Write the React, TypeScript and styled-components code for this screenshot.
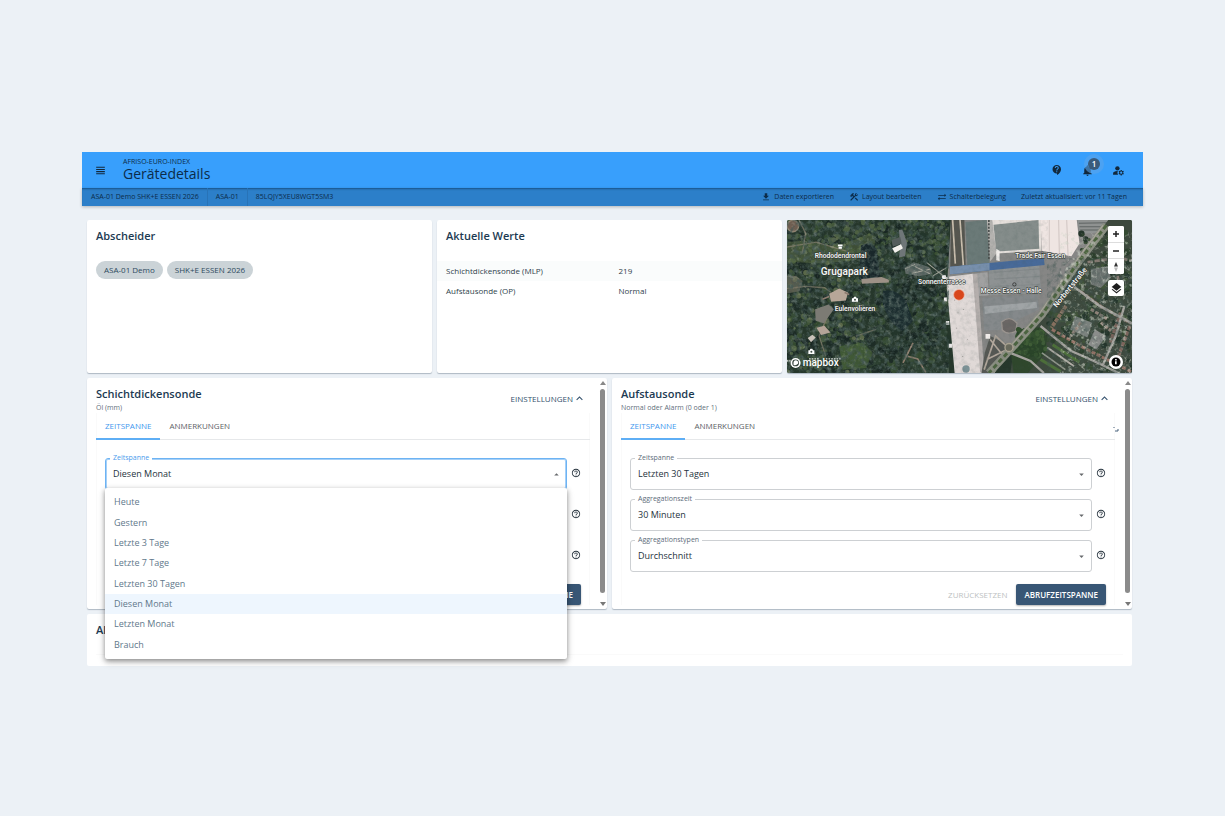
import React, { useId } from "react";
import styled, { createGlobalStyle, css } from "styled-components";
import {
  MdViewHeadline,
  MdContactSupport,
  MdNotifications,
  MdManageAccounts,
  MdDownload,
  MdConstruction,
  MdSyncAlt,
  MdExpandLess,
  MdArrowDropDown,
  MdArrowDropUp,
  MdHelpOutline,
  MdLayers,
} from "react-icons/md";

const navy = "#17364f";
const blue = "#389ffc";

const GlobalStyle = createGlobalStyle`
  *, *::before, *::after { box-sizing: border-box; }
  body {
    margin: 0;
    background: #ecf1f6;
    font-family: "Open Sans", "Noto Sans", sans-serif;
    font-size: 8px;
    line-height: 12px;
    color: ${navy};
  }
  button, select { font: inherit; color: inherit; margin: 0; }
  h1, h2, p, ul { margin: 0; padding: 0; }
`;

const Page = styled.div`
  padding: 152px 82px 150px;
`;

const TopBar = styled.header`
  display: flex;
  align-items: center;
  height: 36px;
  padding: 0 18px 0 12px;
  background: ${blue};
  color: #0c2c49;
`;

const IconButton = styled.button`
  position: relative;
  display: flex;
  align-items: center;
  justify-content: center;
  width: 13px;
  height: 13px;
  padding: 0;
  border: 0;
  background: none;
  color: #12283c;
`;

const Heading = styled.div`
  flex: 1;
  margin-left: 16px;
`;

const Brand = styled.p`
  font-size: 7px;
  line-height: 8px;
`;

const PageTitle = styled.h1`
  font-size: 14px;
  line-height: 16px;
  font-weight: 400;
`;

const Actions = styled.div`
  display: flex;
  gap: 18px;
`;

const Badge = styled.span`
  position: absolute;
  top: -6px;
  left: 7px;
  width: 12px;
  height: 12px;
  border-radius: 50%;
  background: #3a5b7b;
  box-shadow: 0 0 0 4px rgba(90, 165, 235, 0.6);
  color: #fff;
  font-size: 8px;
  font-weight: 600;
  line-height: 12px;
  text-align: center;
`;

const SubBar = styled.nav`
  display: flex;
  align-items: center;
  justify-content: space-between;
  height: 18px;
  padding: 0 16px 0 1px;
  background: #2c7fc9;
  box-shadow: inset 0 2px 2px -1px rgba(10, 50, 90, 0.6), 0 1px 3px rgba(0, 0, 0, 0.25);
  color: #0c2c49;
  font-size: 7px;
`;

const Crumbs = styled.ul`
  display: flex;
  list-style: none;
`;

const Crumb = styled.li`
  padding: 0 8px;
  line-height: 18px;
  & + & { border-left: 1px solid #2873b7; }
`;

const Tools = styled.div`
  display: flex;
  align-items: center;
  gap: 15px;
`;

const Tool = styled.button`
  display: flex;
  align-items: center;
  gap: 3px;
  padding: 0;
  border: 0;
  background: none;
`;

const Main = styled.main`
  display: grid;
  grid-template-columns: repeat(6, 1fr);
  gap: 5px;
  padding: 14px 11px 0 5px;
`;

const Card = styled.section<{ $span: number; $min: number }>`
  grid-column: span ${(p) => p.$span};
  min-width: 0;
  min-height: ${(p) => p.$min}px;
  border-radius: 2px;
  background: #fff;
  box-shadow: 0 1px 1px rgba(60, 80, 100, 0.35);
`;

const InfoCard = styled(Card)`
  padding-top: 8px;
`;

const CardTitle = styled.h2`
  font-size: 11px;
  line-height: 16px;
  font-weight: 600;
  color: #1c3a52;
`;

const InsetTitle = styled(CardTitle)`
  padding: 0 9px;
`;

const Chips = styled.ul`
  display: flex;
  gap: 4px;
  margin: 17px 9px 0;
  list-style: none;
`;

const Chip = styled.li`
  padding: 0 8px;
  border-radius: 9px;
  background: #cbd3d7;
  color: #2d4a5e;
  line-height: 18px;
`;

const Values = styled.table`
  width: 100%;
  margin-top: 17px;
  border-collapse: collapse;
  table-layout: fixed;
  color: #2f3f4b;
  th, td {
    height: 20px;
    padding: 0 9px;
    font-weight: 400;
    text-align: left;
  }
  tr:nth-child(odd) { background: #fafcfc; }
`;

const SensorCard = styled(Card)`
  display: flex;
`;

const SensorBody = styled.div`
  flex: 1;
  min-width: 0;
  padding: 8px 8px 3px 9px;
`;

const SensorHead = styled.div`
  display: flex;
  justify-content: space-between;
  align-items: flex-start;
  height: 27px;
  padding-right: 4px;
`;

const Unit = styled.p`
  font-size: 7px;
  color: #5f6f7d;
`;

const Toggle = styled.button`
  display: flex;
  align-items: center;
  margin-top: 6px;
  padding: 0;
  border: 0;
  background: none;
  color: #34516d;
`;

const Panel = styled.div`
  position: relative;
  box-shadow: inset 1px 0 #fafafa, inset -1px 0 #fafafa;
`;

const TabRow = styled.div`
  display: flex;
  height: 27px;
  border-bottom: 1px solid #e6e8ea;
`;

const Tab = styled.button<{ $active?: boolean }>`
  height: 27px;
  padding: 0 9px 2px;
  border: 0;
  background: none;
  color: #5d6267;
  ${(p) =>
    p.$active &&
    css`
      color: #3f97ee;
      box-shadow: inset 0 -2px 0 #5eaef5;
    `}
`;

const Refresh = styled.svg`
  position: absolute;
  top: 13px;
  right: -4px;
`;

const Form = styled.form`
  display: grid;
  gap: 9px;
  padding: 18px 9px 0;
`;

const FieldRow = styled.div`
  display: flex;
  align-items: flex-start;
  gap: 4px;
`;

const FieldBox = styled.div<{ $covered?: boolean }>`
  position: relative;
  flex: 1;
  min-width: 0;
  visibility: ${(p) => (p.$covered ? "hidden" : "visible")};
`;

const FieldLabel = styled.label<{ $open?: boolean }>`
  position: absolute;
  top: -6px;
  left: 5px;
  padding: 0 3px;
  background: #fff;
  color: ${(p) => (p.$open ? "#4a9bec" : "#5c6c7a")};
  font-size: 7px;
`;

const Select = styled.select<{ $open?: boolean }>`
  display: block;
  appearance: none;
  width: 100%;
  height: 32px;
  padding: 0 7px;
  border: 1px solid #cdd0d3;
  border-radius: 3px;
  background: #fff;
  color: #26333d;
  font-size: 9px;
  ${(p) =>
    p.$open &&
    css`
      border-color: #6db3f3;
      box-shadow: inset 0 0 0 1px #a5d0f8;
    `}
`;

const Arrow = styled.span`
  position: absolute;
  top: 11px;
  right: 5px;
  display: flex;
  color: #66696c;
  pointer-events: none;
`;

const Help = styled.button`
  display: flex;
  width: 10px;
  height: 30px;
  padding: 0;
  border: 0;
  align-items: center;
  background: none;
  color: #25323d;
`;

const Menu = styled.ul`
  position: absolute;
  z-index: 5;
  top: 30px;
  left: 0;
  right: 0;
  display: grid;
  grid-auto-rows: 1fr;
  height: 171px;
  padding: 4px 0;
  border-radius: 2px;
  background: #fff;
  box-shadow: 0 2px 5px rgba(0, 0, 0, 0.38), 0 3px 9px rgba(0, 0, 0, 0.14);
  list-style: none;
`;

const Option = styled.li`
  display: flex;
  align-items: center;
  padding: 0 9px;
  color: #61788b;
  font-size: 9px;
  &[aria-selected="true"] { background: #eef6fe; }
`;

const Buttons = styled.div`
  display: flex;
  justify-content: flex-end;
  gap: 9px;
  padding-top: 3px;
`;

const ResetButton = styled.button<{ $covered?: boolean }>`
  height: 21px;
  padding: 0;
  border: 0;
  background: none;
  color: #bcbfc2;
  visibility: ${(p) => (p.$covered ? "hidden" : "visible")};
`;

const SubmitButton = styled.button`
  height: 21px;
  padding: 0 8px;
  border: 0;
  border-radius: 2px;
  background: #385675;
  box-shadow: 0 1px 2px rgba(0, 0, 0, 0.3);
  color: #fff;
  font-weight: 600;
`;

const Rail = styled.div`
  display: flex;
  flex-direction: column;
  align-items: center;
  gap: 4px;
  width: 9px;
  padding: 3px 0;
`;

const Thumb = styled.div`
  flex: 1;
  width: 5px;
  margin-bottom: 5px;
  border-radius: 3px;
  background: #8b8b8b;
`;

const RailArrow = styled.span<{ $down?: boolean }>`
  width: 0;
  height: 0;
  border: solid transparent;
  border-width: 0 3px;
  ${(p) => (p.$down ? "border-top: 4px solid #777;" : "border-bottom: 4px solid #888;")}
`;

const AlarmCard = styled(Card)`
  padding: 8px 9px 0;
  box-shadow: none;
`;

const AlarmLine = styled.div`
  height: 17px;
  border-bottom: 1px solid #fafafa;
`;

const MapCard = styled(Card)`
  position: relative;
  overflow: hidden;
`;

const MapDrawing = styled.svg`
  display: block;
  width: 100%;
  height: 153px;
`;

const MapControls = styled.div`
  position: absolute;
  top: 6px;
  right: 8px;
  display: grid;
  gap: 6px;
`;

const ControlGroup = styled.div`
  overflow: hidden;
  border-radius: 2px;
  background: #fff;
`;

const ControlButton = styled.button`
  display: flex;
  align-items: center;
  justify-content: center;
  width: 16px;
  height: 16px;
  padding: 0;
  border: 0;
  background: #fff;
  color: #1d1d1d;
  & + & { border-top: 1px solid #ddd; }
`;

const InfoButton = styled.button`
  position: absolute;
  right: 9px;
  bottom: 4px;
  width: 14px;
  height: 14px;
  padding: 0;
  border: 0;
  background: none;
`;

/* Small seeded generator so the foliage looks the same on each render. */
function seeded(seed: number) {
  let s = seed;
  return () => {
    s = (s * 16807) % 2147483647;
    return s / 2147483647;
  };
}

type Blob = { x: number; y: number; r: number; c: string };

function foliage(seed: number, n: number, box: number[], colors: string[], min: number, max: number): Blob[] {
  const rnd = seeded(seed);
  return Array.from({ length: n }, () => ({
    x: box[0] + rnd() * box[2],
    y: box[1] + rnd() * box[3],
    r: min + rnd() * (max - min),
    c: colors[Math.floor(rnd() * colors.length)],
  }));
}

const forestBase = foliage(11, 750, [21, 24, 485, 456], ["#1d2c26", "#23352b", "#2b3f2f", "#182622", "#33492f"], 5, 13);
const forestLight = foliage(29, 200, [21, 24, 230, 456], ["#43573a", "#4d6040", "#3a5033", "#5a6849"], 3, 9);
const forestTop = foliage(71, 90, [200, 24, 300, 120], ["#43573a", "#3a5033", "#4d6040"], 3, 8);
const townTrees = foliage(43, 150, [900, 60, 156, 420], ["#2c3f2c", "#354a32", "#24352a", "#41543a"], 4, 10);
const townTreesLow = foliage(44, 60, [800, 300, 120, 90], ["#2c3f2c", "#354a32", "#24352a", "#41543a"], 4, 10);
const parkTrees = foliage(57, 130, [712, 350, 84, 80], ["#34502f", "#3f5d36", "#2a4429"], 4, 10);

const Blobs = ({ items }: { items: Blob[] }) => (
  <>
    {items.map((b, i) => (
      <circle key={i} cx={b.x} cy={b.y} r={b.r} fill={b.c} />
    ))}
  </>
);

const Camera = ({ x, y }: { x: number; y: number }) => (
  <g transform={`translate(${x} ${y})`}>
    <path d="M-9-4h4l2-4h6l2 4h4v11h-18z" fill="#fff" />
    <circle cy="1" r="3" fill="#46544a" />
  </g>
);

function SatelliteMap() {
  return (
    <MapDrawing viewBox="21 24 1035 456" preserveAspectRatio="xMidYMid slice" role="img" aria-label="Satellitenkarte">
      <defs>
        <filter id="grain" x="0" y="0" width="100%" height="100%">
          <feTurbulence type="fractalNoise" baseFrequency="0.07" numOctaves="4" seed="8" />
          <feColorMatrix values="0 0 0 0 0.06  0 0 0 0 0.1  0 0 0 0 0.09  1.8 1.4 0 0 -1.4" />
        </filter>
        <filter id="glint" x="0" y="0" width="100%" height="100%">
          <feTurbulence type="fractalNoise" baseFrequency="0.08" numOctaves="4" seed="21" />
          <feColorMatrix values="0 0 0 0 0.62  0 0 0 0 0.66  0 0 0 0 0.58  0 3 2 0 -2.6" />
        </filter>
      </defs>

      <rect x="21" y="24" width="1035" height="456" fill="#26372b" />
      <Blobs items={forestBase} />
      <Blobs items={forestLight} />
      <Blobs items={forestTop} />

      {/* clearings, ponds and paths of the park */}
      <path d="M21 90L90 84l60 20 50-10 70-30 20 10-10 50-60 20-90 10-110-6z" fill="#5a6b44" opacity=".55" />
      <path d="M180 400l70-10 30 30-20 45-70 5z" fill="#4e6a3a" opacity=".6" />
      <path d="M245 100q30-15 45 10l12 80-30 25-34-15z" fill="#19272a" />
      <path d="M310 235q40-10 70 30l20 60-30 30q-40-20-60-80z" fill="#1c2d2f" />
      <path d="M21 228l60-6 55 4 20 14M60 24l20 40-10 60M150 300l-30 70 20 60M21 105l90-15 100 30M230 370l60-20" fill="none" stroke="#8d8572" strokeWidth="4" opacity=".7" />
      <circle cx="42" cy="42" r="17" fill="#6f5e51" stroke="#8f8270" strokeWidth="4" />
      <path d="M21 190h30l20 16-10 30-40 8z" fill="#7b7765" opacity=".6" />
      <path d="M374 166l28-16 46 14 10 20-40 8-40-8z" fill="#5f6965" />
      <path d="M400 160l50 24M392 184l60-14M460 190l40-24M440 150l50 40M376 170l30-14" fill="none" stroke="#aaa99e" strokeWidth="3" />
      <path d="M384 430l30 8 24 40M400 390l-30 60" fill="none" stroke="#8d7c6c" strokeWidth="5" />

      {/* exhibition halls */}
      <path d="M513 24h460l-60 130-120 160-180 166h-88l-22-290z" fill="#868685" />
      <path d="M513 24h40l4 140-46 2z" fill="#56564f" />
      <path d="M518 24l8 130M540 24l10 136" stroke="#cabfae" strokeWidth="5" />
      <path d="M556 30l64-6 8 128-66 10z" fill="#6b7a78" />
      <path d="M620 24h20l8 100-18 24z" fill="#b5b3b0" />
      <path d="M626 24v120" stroke="#4c504f" strokeWidth="5" strokeDasharray="6 4" />
      <path d="M636 24h145l2 92-134 8z" fill="#e6e0dc" />
      <path d="M640 38l134-14 2 86-128 8z" fill="#858d8b" />
      <path d="M648 110v34l10 2v-30z" fill="#f2efec" />
      <path d="M780 24h108l8 70-24 38-88-16z" fill="#efe5e2" />
      <path d="M806 24v94M834 24l2 98M858 24l4 104" stroke="#d0c5c2" strokeWidth="3" />
      <path d="M890 24h92l-8 36-76 6z" fill="#8f9291" />
      <path d="M894 34l84-2M896 44h80M898 54h76" stroke="#5f6463" strokeWidth="3" />
      <path d="M626 170l150-12 6 84-154 6z" fill="#8e9293" />
      <path d="M576 184l46-4 4 68-44 4z" fill="#a1a1a1" />
      <path d="M640 180l136-10M642 200l136-8M644 222l134-6" stroke="#7e8485" strokeWidth="2" />
      <path d="M606 256l164-10 6 44-60 30-40 30-64 4z" fill="#85898b" />
      <path d="M612 282l156-14 2 18-156 18z" fill="#a0a4a6" />
      <path d="M510 163l280-26 2 21-282 28z" fill="#486a99" />
      <path d="M510 163l118-11v22l-118 12z" fill="#7890ad" />
      <path d="M498 194l80-10 32 296h-86z" fill="#e0d9d7" />
      <path d="M578 186l14-2 20 294h-12z" fill="#b4aeac" />
      <path d="M524 262v2M534 300v2M550 290v2M530 345v2M562 380v2M548 430v2M570 330v2" stroke="#8f8a88" strokeWidth="3" />
      <path d="M492 255h10v12h-10zM498 325h10v12h-10zM506 393h10v12h-10zM486 188h12v12h-12z" fill="#f1eeee" />
      <circle cx="558" cy="468" r="11" fill="#7c9296" />
      <path d="M664 328q24-22 46 4l-4 24q-26 12-40-4z" fill="#6b6765" stroke="#9a948f" strokeWidth="4" />
      <path d="M604 480l10-60 16-50 50 24 10 30-50 56z" fill="#565854" />
      <path d="M612 470l34-100 40 36-46 74M630 380l40 50M620 440l60-30" fill="none" stroke="#b2a79c" strokeWidth="5" />
      <path d="M616 364h14v14h-14z" fill="#f0ecea" />

      {/* residential area with its streets */}
      <path d="M982 24h74v456H690l10-70 80-90 90-130 60-100z" fill="#3d493d" />
      <Blobs items={townTrees} />
      <Blobs items={townTreesLow} />
      <path d="M930 170l50-8 10 34-30 30-30-10z" fill="#6f7572" />
      <path d="M884 310l50 20-14 44-52-24z" fill="#7a817d" />
      <path d="M942 350l34 20-30 40-24-14z" fill="#8b8d8b" />
      <path d="M920 150l90-14 46 10M1000 150l14 60" fill="none" stroke="#857a72" strokeWidth="8" strokeDasharray="16 5" />
      <path d="M900 238l60 44 90 50" fill="none" stroke="#8d7468" strokeWidth="9" strokeDasharray="13 4" />
      <path d="M900 330l-30 40M960 330l30 24M930 290l50 30" fill="none" stroke="#94857b" strokeWidth="9" strokeDasharray="11 4" />
      <path d="M1018 300l-30 90M1046 340l-34 90" fill="none" stroke="#7d655c" strokeWidth="10" strokeDasharray="13 4" />
      <path d="M856 280l-44 66" fill="none" stroke="#87705f" strokeWidth="11" strokeDasharray="12 3" />
      <path d="M814 350l86 50 90 46 60 30" fill="none" stroke="#947265" strokeWidth="9" strokeDasharray="12 5" />
      <path d="M700 480l-10-70 30-60 56-6 24 30-8 50-50 56z" fill="#2f472c" />
      <Blobs items={parkTrees} />
      <path d="M800 404l80 56" stroke="#b4b0a8" strokeWidth="6" />
      <path d="M784 420l70 50" stroke="#8f958a" strokeWidth="5" />
      <path d="M780 440l60 36M816 396l80 52" stroke="#4d7039" strokeWidth="9" />
      <path d="M780 340l90 74 90 40 60 30M876 220l80 60 100 54M690 420l60 24 40 36M1030 280l-26 90-40 90" fill="none" stroke="#a5a39e" strokeWidth="7" />
      <path d="M976 40l-94 124-96 140-90 100-70 76" fill="none" stroke="#8b8f82" strokeWidth="23" />
      <path d="M976 40l-94 124-96 140-90 100-70 76" fill="none" stroke="#4d6540" strokeWidth="9" strokeDasharray="14 9" />
      <path d="M966 40l-94 124-96 140-86 96" fill="none" stroke="#aaa69c" strokeWidth="3" />
      <circle cx="686" cy="404" r="12" fill="#6a6b5d" stroke="#b0a795" strokeWidth="4" />

      <rect x="21" y="24" width="484" height="456" filter="url(#grain)" />
      <rect x="21" y="24" width="484" height="456" filter="url(#glint)" opacity=".22" />
      <rect x="800" y="140" width="256" height="340" filter="url(#grain)" opacity=".6" />
      <rect x="840" y="60" width="216" height="420" filter="url(#glint)" opacity=".6" />
      <rect x="505" y="24" width="295" height="456" filter="url(#grain)" opacity=".14" />

      {/* pale ground and roofs that stand out from the trees */}
      <path d="M150 244l30-16 26 12-6 24-44 4z" fill="#b7a698" />
      <path d="M150 252l-20 8M196 240l14 6" stroke="#8d7c70" strokeWidth="5" />
      <path d="M108 290l40-14 16 14-30 42-24-8z" fill="#7c7b74" />
      <path d="M112 345l24-6 18 20-28 8z" fill="#b5a498" />
      <path d="M246 200l60-6 22 8v8l-80 4z" fill="#9d9186" />
      <path d="M358 54l10-2 14 40-6 40-18 4 4-30z" fill="#6f7678" />
      <path d="M336 84l26-10 4 20-26 10z" fill="#555d5c" />
      <path d="M338 108l26-12 6 12-24 14z" fill="#f3f0ec" />
      <path d="M86 376l14-10 10 8-14 14z" fill="#c9c2ba" />

      {/* place names */}
      <g fill="#f4f5f3" stroke="#2c3430" strokeWidth="3" paintOrder="stroke" fontFamily="Roboto, sans-serif" fontWeight="600" fontSize="20">
        <text x="107" y="136">Rhododendrontal</text>
        <text x="125" y="188" fontSize="30">Grugapark</text>
        <text x="167" y="294">Eulenvolieren</text>
        <text x="415" y="215">Sonnenterrasse</text>
        <text x="705" y="137">Trade Fair Essen</text>
        <text x="602" y="242">Messe Essen - Halle</text>
        <text transform="translate(828 286) rotate(-51)" fontSize="23">Norbertstraße</text>
      </g>
      <path d="M176 97h14v5h-14zM178 104h10v6h-10z" fill="#fff" />
      <Camera x={227} y={261} />
      <Camera x={97} y={416} />
      <circle cx="702" cy="216" r="5" fill="none" stroke="#222" strokeWidth="2" />
      <circle cx="537" cy="247" r="16" fill="#d8471c" stroke="#f0b9a8" strokeWidth="2" />

      {/* provider mark, over a caption that it hides for the most part */}
      <path d="M23 444h12M90 438h30M140 438h44" stroke="#dfe2df" strokeWidth="4" strokeDasharray="5 3" />
      <circle cx="50" cy="450" r="15" fill="#fff" />
      <circle cx="50" cy="450" r="10" fill="#34423a" />
      <path d="M44 456q-2-14 7-14 9 2 6 10-5 7-13 4z" fill="#fff" />
      <text x="71" y="458" fill="#fff" fontFamily="Roboto, sans-serif" fontWeight="500" fontSize="30">mapbox</text>
    </MapDrawing>
  );
}

const ranges = [
  "Heute",
  "Gestern",
  "Letzte 3 Tage",
  "Letzte 7 Tage",
  "Letzten 30 Tagen",
  "Diesen Monat",
  "Letzten Monat",
  "Brauch",
];

type FieldProps = { label: string; value: string; open?: boolean; covered?: boolean; options?: string[] };

function Field({ label, value, open, covered, options = [value] }: FieldProps) {
  const id = useId();
  return (
    <FieldRow>
      <FieldBox $covered={covered}>
        <Select id={id} defaultValue={value} $open={open}>
          {options.map((o) => (
            <option key={o}>{o}</option>
          ))}
        </Select>
        <FieldLabel htmlFor={id} $open={open}>{label}</FieldLabel>
        <Arrow>{open ? <MdArrowDropUp size={11} /> : <MdArrowDropDown size={11} />}</Arrow>
        {open && (
          <Menu role="listbox" aria-label={label}>
            {options.map((o) => (
              <Option key={o} role="option" aria-selected={o === value}>{o}</Option>
            ))}
          </Menu>
        )}
      </FieldBox>
      <Help type="button" aria-label={`Hilfe zu ${label}`}>
        <MdHelpOutline size={10} />
      </Help>
    </FieldRow>
  );
}

type SensorProps = { title: string; unit: string; range: string; open?: boolean; loading?: boolean };

function Sensor({ title, unit, range, open, loading }: SensorProps) {
  return (
    <SensorCard $span={3} $min={231}>
      <SensorBody>
        <SensorHead>
          <div>
            <CardTitle>{title}</CardTitle>
            <Unit>{unit}</Unit>
          </div>
          <Toggle type="button" aria-expanded="true">
            EINSTELLUNGEN <MdExpandLess size={13} />
          </Toggle>
        </SensorHead>
        <Panel>
          <TabRow role="tablist">
            <Tab role="tab" aria-selected="true" $active>ZEITSPANNE</Tab>
            <Tab role="tab" aria-selected="false">ANMERKUNGEN</Tab>
          </TabRow>
          {loading && (
            <Refresh width="6" height="7" viewBox="0 0 6 7" aria-hidden="true">
              <path d="M1 1v1M2 5h3V3" fill="none" stroke="#47607a" />
            </Refresh>
          )}
          <Form onSubmit={(e: React.FormEvent) => e.preventDefault()}>
            <Field label="Zeitspanne" value={range} open={open} options={ranges} />
            <Field label="Aggregationszeit" value="30 Minuten" covered={open} />
            <Field label="Aggregationstypen" value="Durchschnitt" covered={open} />
            <Buttons>
              <ResetButton type="reset" disabled $covered={open}>ZURÜCKSETZEN</ResetButton>
              <SubmitButton type="submit">ABRUFZEITSPANNE</SubmitButton>
            </Buttons>
          </Form>
        </Panel>
      </SensorBody>
      <Rail aria-hidden="true">
        <RailArrow />
        <Thumb />
        <RailArrow $down />
      </Rail>
    </SensorCard>
  );
}

export default function App() {
  return (
    <Page>
      <GlobalStyle />
      <TopBar>
        <IconButton aria-label="Menü"><MdViewHeadline size={15} /></IconButton>
        <Heading>
          <Brand>AFRISO-EURO-INDEX</Brand>
          <PageTitle>Gerätedetails</PageTitle>
        </Heading>
        <Actions>
          <IconButton aria-label="Hilfe"><MdContactSupport size={12} /></IconButton>
          <IconButton aria-label="Benachrichtigungen">
            <MdNotifications size={13} />
            <Badge>1</Badge>
          </IconButton>
          <IconButton aria-label="Konto"><MdManageAccounts size={13} /></IconButton>
        </Actions>
      </TopBar>
      <SubBar>
        <Crumbs>
          <Crumb>ASA-01 Demo SHK+E ESSEN 2026</Crumb>
          <Crumb>ASA-01</Crumb>
          <Crumb>85LQJY5XEU8WGT5SM3</Crumb>
        </Crumbs>
        <Tools>
          <Tool><MdDownload size={10} />Daten exportieren</Tool>
          <Tool><MdConstruction size={10} />Layout bearbeiten</Tool>
          <Tool><MdSyncAlt size={10} />Schalterbelegung</Tool>
          <span>Zuletzt aktualisiert: vor 11 Tagen</span>
        </Tools>
      </SubBar>
      <Main>
        <InfoCard $span={2} $min={153}>
          <InsetTitle>Abscheider</InsetTitle>
          <Chips>
            <Chip>ASA-01 Demo</Chip>
            <Chip>SHK+E ESSEN 2026</Chip>
          </Chips>
        </InfoCard>
        <InfoCard $span={2} $min={153}>
          <InsetTitle>Aktuelle Werte</InsetTitle>
          <Values>
            <tbody>
              <tr><th scope="row">Schichtdickensonde (MLP)</th><td>219</td></tr>
              <tr><th scope="row">Aufstausonde (OP)</th><td>Normal</td></tr>
            </tbody>
          </Values>
        </InfoCard>
        <MapCard $span={2} $min={153}>
          <SatelliteMap />
          <MapControls>
            <ControlGroup>
              <ControlButton aria-label="Vergrößern">
                <svg width="8" height="8" viewBox="0 0 8 8"><path d="M4 1v6M1 4h6" stroke="#222" strokeWidth="1.500" /></svg>
              </ControlButton>
              <ControlButton aria-label="Verkleinern">
                <svg width="8" height="8" viewBox="0 0 8 8"><path d="M1 4h6" stroke="#222" strokeWidth="1.500" /></svg>
              </ControlButton>
              <ControlButton aria-label="Nach Norden ausrichten">
                <svg width="10" height="12" viewBox="0 0 10 12">
                  <path d="M3 5.500L5 1l2 4.500z" fill="#333" />
                  <path d="M3 6.500L5 11l2-4.500z" fill="#bbb" />
                </svg>
              </ControlButton>
            </ControlGroup>
            <ControlGroup>
              <ControlButton aria-label="Ebenen"><MdLayers size={13} /></ControlButton>
            </ControlGroup>
          </MapControls>
          <InfoButton aria-label="Kartenquelle">
            <svg width="14" height="14" viewBox="0 0 14 14">
              <circle cx="7" cy="7" r="7" fill="#fff" />
              <circle cx="7" cy="7" r="4.500" fill="#000" />
              <path d="M6 6.300h1.700v3H6zM6.100 4h1.600v1.400H6.100z" fill="#fff" />
            </svg>
          </InfoButton>
        </MapCard>
        <Sensor title="Schichtdickensonde" unit="Öl (mm)" range="Diesen Monat" open />
        <Sensor title="Aufstausonde" unit="Normal oder Alarm (0 oder 1)" range="Letzten 30 Tagen" loading />
        <AlarmCard $span={6} $min={52}>
          <CardTitle>Alarme</CardTitle>
          <AlarmLine />
        </AlarmCard>
      </Main>
    </Page>
  );
}
